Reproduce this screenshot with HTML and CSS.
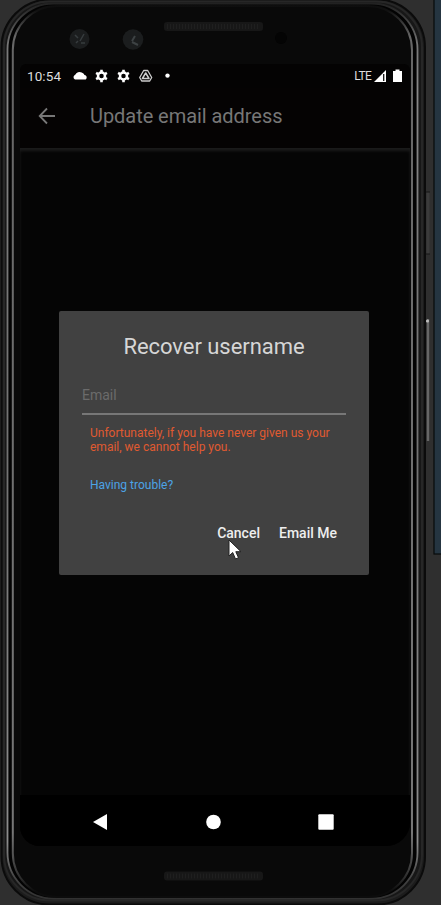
FILE: index.html
```html
<!DOCTYPE html>
<html lang="en">
<head>
<meta charset="utf-8">
<title>Recover username</title>
<link rel="stylesheet" href="styles.css">
</head>
<body>
<div class="desktop">
  <svg class="device" viewBox="0 0 441 905" aria-hidden="true">
    <defs>
      <linearGradient id="rim" x1="0" y1="0" x2="0" y2="905" gradientUnits="userSpaceOnUse">
        <stop offset="0" stop-color="#1c1c1c"/><stop offset=".015" stop-color="#333"/><stop offset=".05" stop-color="#777"/><stop offset=".1" stop-color="#888"/>
        <stop offset=".3" stop-color="#777"/><stop offset=".5" stop-color="#727272"/><stop offset=".93" stop-color="#8c8c8c"/>
        <stop offset=".97" stop-color="#444"/><stop offset="1" stop-color="#2b2b2b"/>
      </linearGradient>
      <linearGradient id="innerRim" x1="0" y1="0" x2="0" y2="905" gradientUnits="userSpaceOnUse">
        <stop offset="0" stop-color="#0a0a0a"/><stop offset=".012" stop-color="#111"/><stop offset=".04" stop-color="#666"/>
        <stop offset=".5" stop-color="#707070"/><stop offset=".92" stop-color="#777"/>
        <stop offset=".97" stop-color="#2d2d2d"/><stop offset=".985" stop-color="#0c0c0c"/>
      </linearGradient>
    </defs>
    <rect x="434" y="-2" width="9" height="556" fill="#253541" stroke="#080a0b" stroke-width="1.2"/>
    <path d="M428 192v62" stroke="#3b3b3b" stroke-width="3"/>
    <path d="M426 192h4M426 254h4" stroke="#171717"/>
    <path d="M428 319v122" stroke="#666" stroke-width="2.4"/>
    <circle cx="427.500" cy="321" r="1.600" fill="#bbb"/>
    <rect x="1.500" y="-.5" width="423.500" height="905" rx="48" fill="#1c1c1c" stroke="#0b0b0b" stroke-width="2"/>
    <rect x="4" y="1.500" width="418" height="899" rx="46" fill="#171717" stroke="#272727" stroke-width="2"/>
    <rect x="7.500" y="3.500" width="410" height="895" rx="46" fill="#030303" stroke="url(#rim)" stroke-width="1.800"/>
    <rect x="12.800" y="6" width="399.200" height="891" rx="44" fill="#090909" stroke="url(#innerRim)" stroke-width="2"/>
    <rect x="164" y="22" width="99" height="9" rx="3" fill="#171717"/>
    <rect x="164" y="871.500" width="99" height="9" rx="3" fill="#171717"/>
    <path d="M167 26.500h93M167 876h93" stroke="#1f1f1f" stroke-width="5" stroke-dasharray="1 2"/>
    <circle cx="79.500" cy="39" r="10" fill="#1b1d1e"/>
    <path d="M75 35l3 3M80 41l4-7M81 43h4M76 43l2-2" stroke="#373c3e" stroke-width="1.500"/>
    <circle cx="133" cy="39.500" r="10.300" fill="#1b1d1e"/>
    <path d="M132 41l3-5M132 42l6 3" stroke="#3d4244" stroke-width="2"/>
    <circle cx="281" cy="38" r="6" fill="#040404"/>
  </svg>

  <div class="screen">
    <div class="status">
      <span class="time">10:54</span>
      <svg class="notifications" viewBox="0 0 102 16" aria-hidden="true">
        <path d="M3 11.500a2.600 2.600 0 0 1 .2-4.800 5 5 0 0 1 6.500-2.300 4 4 0 0 1 2.800 2.600 2.500 2.500 0 0 1 1.200 4.500z" fill="#fff"/>
        <g id="gear"><circle cx="29.500" cy="8" r="3.500" fill="none" stroke="#fff" stroke-width="2.500"/>
        <path d="M29.500 1.800v2.700M29.500 11.500v2.700M24.100 4.900l2.400 1.400M32.500 9.700l2.400 1.400M34.900 4.900l-2.400 1.400M26.500 9.700l-2.400 1.400" stroke="#fff" stroke-width="2.600"/></g>
        <use href="#gear" x="22"/>
        <path d="M71.700 2.500h4l4 7-2 3.500h-8l-2-3.500z" fill="none" stroke="#ccc" stroke-width="1.300" stroke-linejoin="round"/>
        <path d="M73.700 5l3.300 5.500h-6.600z" fill="none" stroke="#ccc" stroke-width="1.500" stroke-linejoin="round"/>
        <circle cx="95.500" cy="7.600" r="2.200" fill="#fff"/>
      </svg>
      <span class="lte">LTE</span>
      <svg class="signal" viewBox="0 0 28 16" aria-hidden="true">
        <path d="M0 14L12 2v12z" fill="#fff"/><path d="M9.700 6v7" stroke="#111" stroke-width="1.300"/>
        <path d="M19 3h2.500V1.500h4V3H28v11h-9z" fill="#fff"/>
      </svg>
    </div>
    <header class="toolbar">
      <svg class="back" viewBox="0 0 18 18" aria-hidden="true"><path d="M17 9H2M9 1.500L1.700 9 9 16.500" fill="none" stroke="#777" stroke-width="1.800"/></svg>
      <span class="page-title">Update email address</span>
    </header>
    <main class="content">
      <section class="dialog">
        <h1>Recover username</h1>
        <div class="field">Email</div>
        <p class="warning">Unfortunately, if you have never given us your<br>email, we cannot help you.</p>
        <a class="trouble">Having trouble?</a>
        <div class="actions"><span class="action">Cancel</span><span class="action">Email Me</span></div>
        <svg class="pointer" viewBox="0 0 14 21" aria-hidden="true"><path d="M1 1v16l3.700-3.500L7.500 20l3-1.300-2.700-6H13z" fill="#fff" stroke="#222"/></svg>
      </section>
    </main>
    <nav class="navbar">
      <svg viewBox="0 0 16 16" aria-hidden="true"><path d="M1 8L15 0v16z" fill="#fff"/></svg>
      <svg viewBox="0 0 16 16" aria-hidden="true"><circle cx="8.500" cy="8" r="7.300" fill="#fff"/></svg>
      <svg viewBox="0 0 16 16" aria-hidden="true"><rect x=".3" y=".3" width="15.400" height="15.400" rx="1" fill="#fff"/></svg>
    </nav>
  </div>
</div>
</body>
</html>
```
FILE: styles.css
```css
* { box-sizing: border-box; }
body { margin: 0; background: #2f2f2f; font-family: Roboto, "Liberation Sans", sans-serif; }
.desktop { position: relative; width: 441px; height: 905px; padding: 64px 31px 59px 20px; overflow: hidden; }
.device { position: absolute; top: 0; left: 0; width: 441px; height: 905px; }
.screen { position: relative; display: flex; flex-direction: column; height: 782px; background: #040303; border-radius: 6px 6px 24px 20px; overflow: hidden; }
.status { display: flex; align-items: center; height: 24px; padding: 0 8px 0 7px; color: #ddd; }
.time { width: 45px; font-size: 13.5px; letter-spacing: .1px; white-space: nowrap; }
.notifications { width: 102px; height: 16px; }
.lte { margin-left: auto; font-size: 12px; letter-spacing: -.7px; }
.signal { width: 28px; height: 16px; margin-left: 3px; }
.toolbar { display: flex; align-items: center; height: 60px; padding: 0 18px 5px; background: #050303; color: #777; }
.back { width: 18px; height: 18px; }
.page-title { margin-left: 34px; font-size: 20px; letter-spacing: -.05px; }
.content { height: 647px; padding: 163px 41px 0 39px; background: #050505; box-shadow: inset 0 3px 3px #1b1b1b; }
.dialog { position: relative; width: 310px; height: 264px; padding: 21px 23px; background: #414141; border-radius: 2px; }
h1 { margin: 0; font-size: 22px; line-height: 30px; font-weight: 400; letter-spacing: -.05px; text-align: center; color: #d6d6d6; }
.field { width: 264px; height: 42px; margin-top: 11px; padding-top: 12px; border-bottom: 2px solid #777; font-size: 14px; line-height: 20px; color: #6b6b6b; }
.warning { margin: 11px 0 0 8px; font-size: 12px; line-height: 14px; color: #e05a30; white-space: nowrap; }
.trouble { display: block; margin: 23px 0 0 8px; font-size: 12px; line-height: 16px; color: #4ca3e6; }
.actions { display: flex; justify-content: flex-end; gap: 19px; margin: 31px 9px 0 0; font-size: 14px; line-height: 18px; font-weight: 500; color: #eee; }
.pointer { position: absolute; left: 169px; top: 228px; width: 14px; height: 21px; }
.navbar { display: flex; align-items: center; justify-content: space-between; height: 51px; padding: 3px 76px 0 72px; background: #000; }
.navbar svg { width: 16px; height: 16px; }
```
